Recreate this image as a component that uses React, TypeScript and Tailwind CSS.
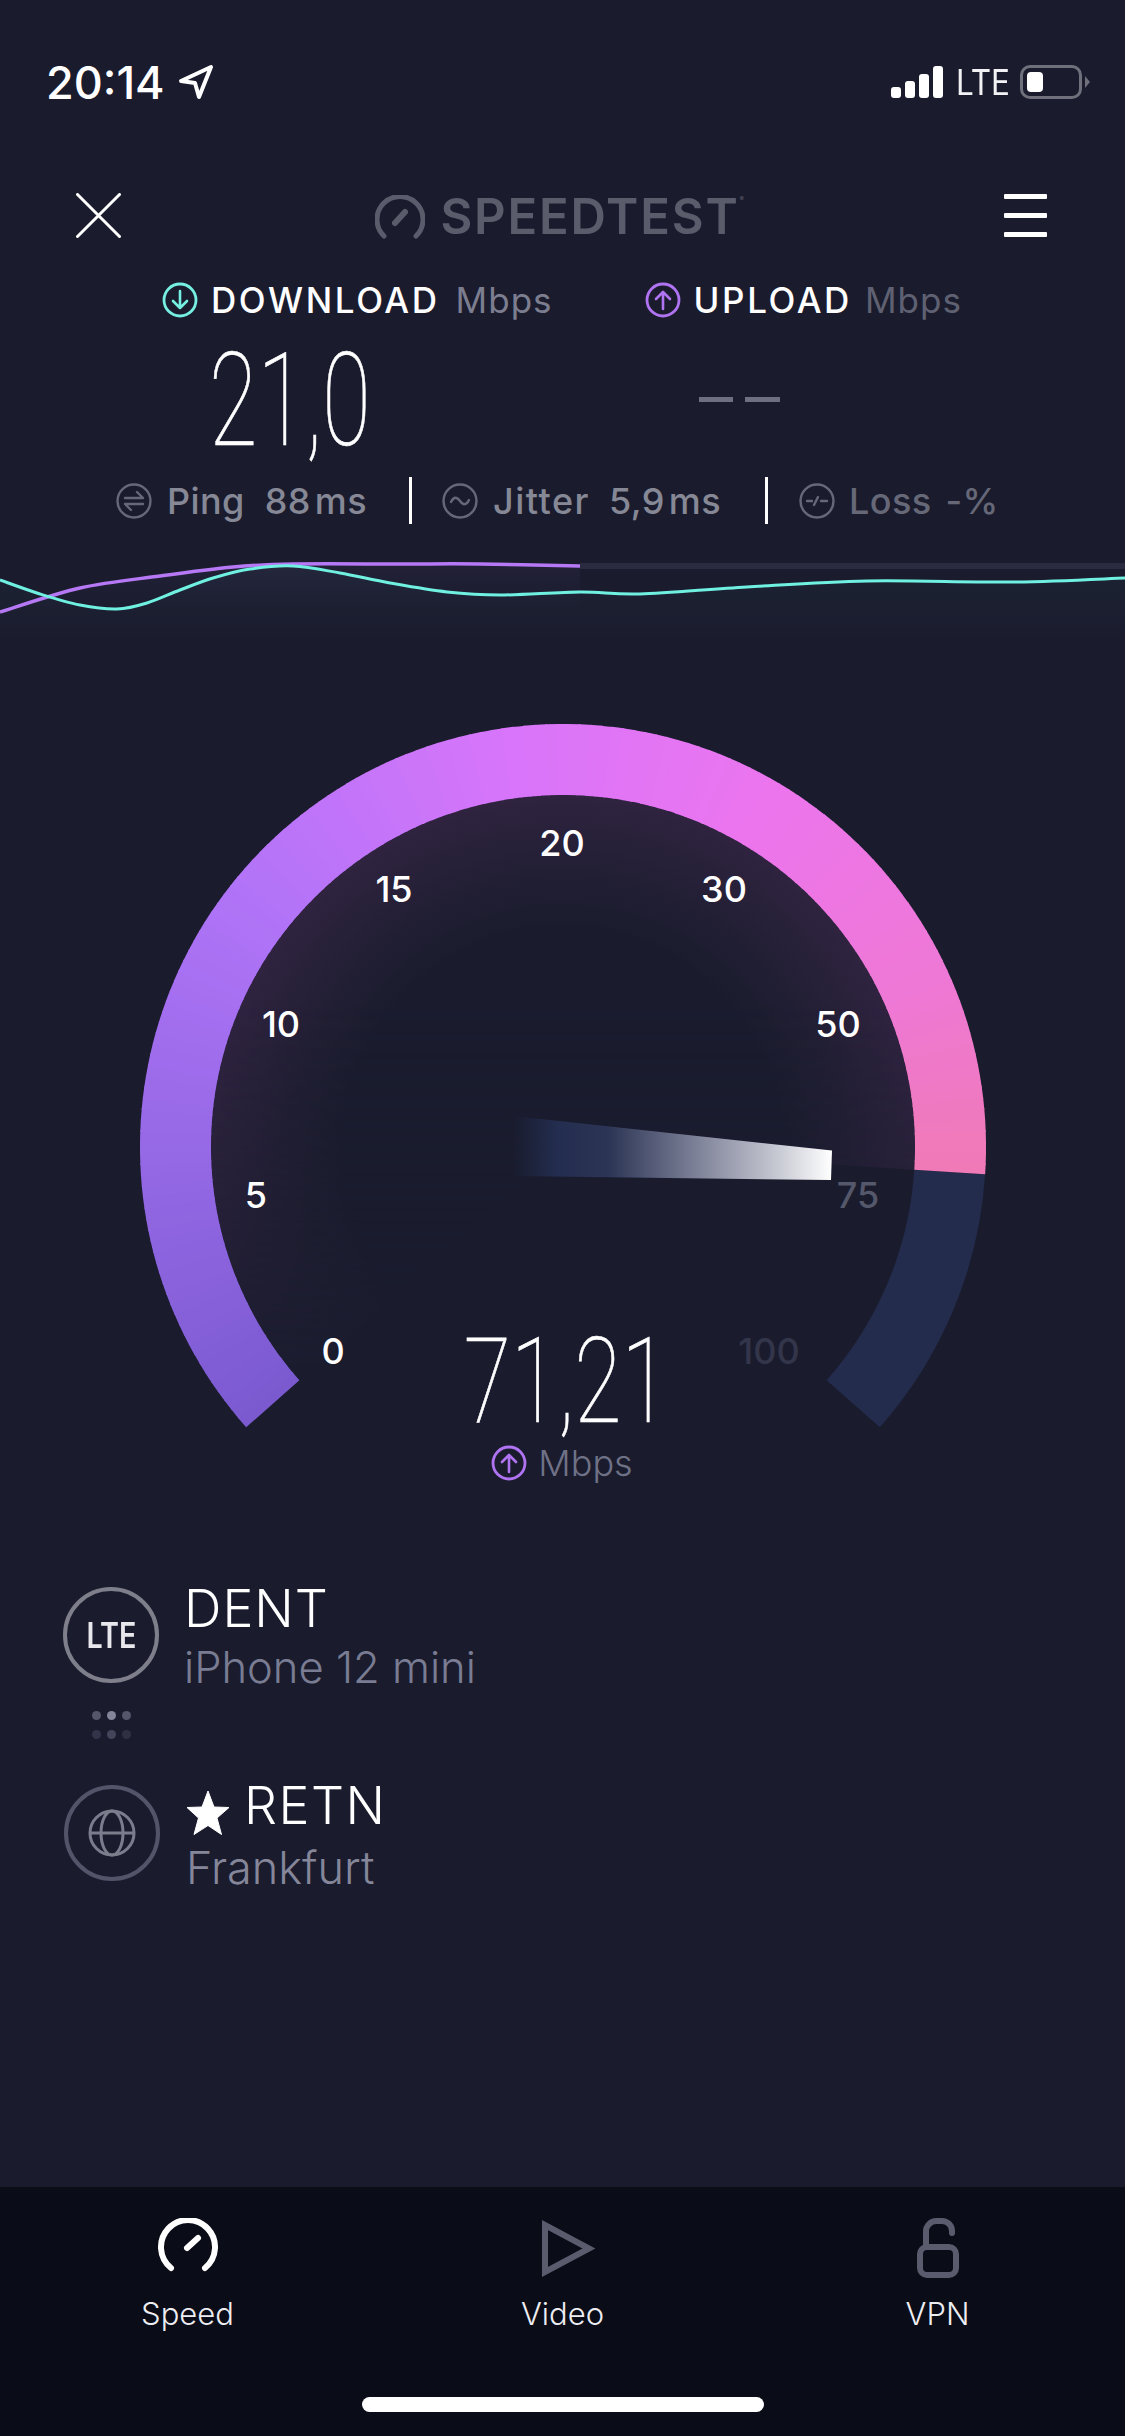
const SANS = "font-['Inter','Noto_Sans',sans-serif]";

// gauge geometry, in the svg's own coordinates
const CX = 563;
const CY = 447;
const R_OUT = 423;
const R_IN = 352;
const START = 138.5; // degrees clockwise from 3 o'clock
const FILL_END = 363.7;
const TRACK_END = 401.5; // 41.5 degrees below horizontal on the right

const polar = (r: number, deg: number) => {
  const a = (deg * Math.PI) / 180;
  return [CX + r * Math.cos(a), CY + r * Math.sin(a)];
};

const ringPath = (from: number, to: number) => {
  const [a, b] = polar(R_OUT, from);
  const [c, d] = polar(R_OUT, to);
  const [e, f] = polar(R_IN, to);
  const [g, h] = polar(R_IN, from);
  const large = to - from > 180 ? 1 : 0;
  return `M${a} ${b}A${R_OUT} ${R_OUT} 0 ${large} 1 ${c} ${d}L${e} ${f}A${R_IN} ${R_IN} 0 ${large} 0 ${g} ${h}Z`;
};

const STOPS: [number, number[]][] = [
  [0, [122, 90, 208]],
  [0.2, [152, 106, 232]],
  [0.36, [178, 116, 248]],
  [0.55, [216, 117, 250]],
  [0.72, [236, 117, 238]],
  [0.88, [238, 120, 212]],
  [1, [240, 122, 182]],
];

const colorAt = (t: number) => {
  for (let i = 1; i < STOPS.length; i++) {
    if (t <= STOPS[i][0]) {
      const [t0, c0] = STOPS[i - 1];
      const [t1, c1] = STOPS[i];
      const k = (t - t0) / (t1 - t0);
      const c = c0.map((v, j) => Math.round(v + (c1[j] - v) * k));
      return `rgb(${c[0]},${c[1]},${c[2]})`;
    }
  }
  return "rgb(240,122,182)";
};

const segments = Array.from({ length: 150 }, (_, i) => {
  const step = (FILL_END - START) / 150;
  const from = START + i * step;
  return { d: ringPath(from, Math.min(from + step + 0.25, FILL_END)), color: colorAt((i + 0.5) / 150) };
});

const smooth = (pts: number[][]) => {
  let d = `M${pts[0][0]} ${pts[0][1]}`;
  for (let i = 0; i < pts.length - 1; i++) {
    const p0 = pts[i - 1] || pts[i];
    const p1 = pts[i];
    const p2 = pts[i + 1];
    const p3 = pts[i + 2] || p2;
    d += `C${p1[0] + (p2[0] - p0[0]) / 6} ${p1[1] + (p2[1] - p0[1]) / 6} ${p2[0] - (p3[0] - p1[0]) / 6} ${p2[1] - (p3[1] - p1[1]) / 6} ${p2[0]} ${p2[1]}`;
  }
  return d;
};

// chart points, y relative to the top of the chart (540)
const PURPLE = [[0, 72], [80, 48], [160, 36], [233, 27], [293, 24], [400, 24], [480, 24], [580, 26]];
const CYAN = [[0, 40], [40, 54], [80, 65], [117, 69], [147, 63], [180, 50], [213, 38], [250, 29], [293, 26], [340, 33], [390, 43], [447, 52], [500, 55], [580, 52], [640, 54], [747, 47], [867, 41], [1013, 42], [1125, 38]];

function CircleArrow({ color, down }: { color: string; down?: boolean }) {
  return (
    <svg width="36" height="36" viewBox="0 0 36 36" fill="none" stroke={color} className="shrink-0">
      <circle cx="18" cy="18" r="16" strokeWidth="2.8" />
      {down ? (
        <path d="M18 9v17M11 19l7 7 7-7" strokeWidth="2.6" strokeLinecap="round" strokeLinejoin="round" />
      ) : (
        <path d="M18 27V10M11 17l7-7 7 7" strokeWidth="2.6" strokeLinecap="round" strokeLinejoin="round" />
      )}
    </svg>
  );
}

function StatIcon({ children, color }: { children: React.ReactNode; color: string }) {
  return (
    <svg width="36" height="36" viewBox="0 0 36 36" fill="none" stroke={color} strokeWidth="2.4" strokeLinecap="round" strokeLinejoin="round" className="shrink-0">
      <circle cx="18" cy="18" r="16.5" />
      {children}
    </svg>
  );
}

function TabLabel({ children }: { children: React.ReactNode }) {
  return <span className={`${SANS} text-[31px] font-light leading-none text-[#eeeef2] mt-[19px]`}>{children}</span>;
}

function Tick({ x, y, color = "text-white", children }: { x: number; y: number; color?: string; children: React.ReactNode }) {
  return (
    <span
      className={`${SANS} absolute -translate-x-1/2 -translate-y-1/2 text-[36px] leading-none font-medium ${color}`}
      style={{ left: x, top: y }}
    >
      {children}
    </span>
  );
}

function Gauge() {
  return (
    <div className="relative w-full h-[800px] mt-[40px] shrink-0">
      <svg width="1125" height="800" viewBox="0 0 1125 800" className="block">
        <defs>
          <radialGradient id="glow" gradientUnits="userSpaceOnUse" cx={CX} cy={CY} r={R_IN}>
            <stop offset="0.62" stopColor="#1a1c2e" />
            <stop offset="0.8" stopColor="#231f35" />
            <stop offset="1" stopColor="#2f2340" />
          </radialGradient>
          <linearGradient id="glowFade" gradientUnits="userSpaceOnUse" x1="0" y1="300" x2="0" y2="680">
            <stop offset="0" stopColor="#fff" />
            <stop offset="0.4" stopColor="#bbb" />
            <stop offset="1" stopColor="#000" />
          </linearGradient>
          <mask id="glowMask" maskUnits="userSpaceOnUse" x="0" y="0" width="1125" height="800">
            <rect width="1125" height="800" fill="url(#glowFade)" />
          </mask>
          <linearGradient id="needle" gradientUnits="userSpaceOnUse" x1="513" y1="0" x2="832" y2="0">
            <stop offset="0" stopColor="#232d4f" stopOpacity="0" />
            <stop offset="0.14" stopColor="#232d4f" />
            <stop offset="0.3" stopColor="#2c3555" />
            <stop offset="0.55" stopColor="#767a92" />
            <stop offset="0.82" stopColor="#c4c6d0" />
            <stop offset="1" stopColor="#ffffff" />
          </linearGradient>
        </defs>
        {/* glow inside the filled part */}
        <path
          d={`M${CX} ${CY}L${polar(R_IN, START).join(" ")}A${R_IN} ${R_IN} 0 1 1 ${polar(R_IN, FILL_END).join(" ")}Z`}
          fill="url(#glow)"
          mask="url(#glowMask)"
        />
        {/* dark rest of the track */}
        <path d={ringPath(FILL_END, TRACK_END)} fill="#232c4c" />
        {segments.map((s, i) => (
          <path key={i} d={s.d} fill={s.color} />
        ))}
        {/* needle */}
        <path d="M513 416L832 450.500L831 480L513 476Z" fill="url(#needle)" />
      </svg>

      {/* scale labels sit on the dial */}
      <Tick x={333} y={651}>0</Tick>
      <Tick x={256} y={495}>5</Tick>
      <Tick x={281} y={324}>10</Tick>
      <Tick x={394} y={189}>15</Tick>
      <Tick x={562} y={143}>20</Tick>
      <Tick x={724} y={189}>30</Tick>
      <Tick x={838} y={324}>50</Tick>
      <Tick x={858} y={495} color="text-[#55576a]">75</Tick>
      <Tick x={769} y={651} color="text-[#33354a]">100</Tick>

      <div className="absolute left-0 right-0 top-[632px] flex flex-col items-center">
        <span className="font-['Roboto',sans-serif] font-[150] [-webkit-text-stroke:0.7px_white] text-[118px] leading-[100px] text-white scale-x-[0.73] translate-x-[4px] whitespace-nowrap">
          71,21
        </span>
        <div className="flex items-center gap-[11px] mt-[13px] ml-[-1px]">
          <CircleArrow color="#b074f2" />
          <span className={`${SANS} font-light text-[36px] leading-[36px] text-[#6f7286]`}>Mbps</span>
        </div>
      </div>
    </div>
  );
}

export default function App() {
  return (
    <div className={`${SANS} w-[1125px] h-[2436px] bg-[#1a1c2e] flex flex-col overflow-hidden`}>
      {/* Status bar */}
      <div className="flex items-center justify-between h-[44px] mt-[60px] pl-[46px] pr-[35px]">
        <div className="flex items-center gap-[13px]">
          <span className="text-[45px] leading-none font-medium text-white">20:14</span>
          <svg width="36" height="36" viewBox="0 0 36 36" fill="none" stroke="#fff" strokeWidth="4" strokeLinejoin="round">
            <path d="M3 17L33 3L21 33L17 19Z" />
          </svg>
        </div>
        <div className="flex items-center">
          <div className="flex items-end gap-[4px] h-[32px]">
            <div className="w-[10px] h-[11px] rounded-[3px] bg-white" />
            <div className="w-[10px] h-[17px] rounded-[3px] bg-white" />
            <div className="w-[10px] h-[24px] rounded-[3px] bg-white" />
            <div className="w-[10px] h-[32px] rounded-[3px] bg-white" />
          </div>
          <span className="text-[35px] leading-none font-normal text-[#f2f2f4] ml-[13px] scale-x-[0.9] origin-left w-[52px]">LTE</span>
          <div className="flex items-center ml-[12px]">
            <div className="w-[62px] h-[34px] rounded-[10px] border-[3px] border-[#6f707c] p-[4px]">
              <div className="w-[16px] h-full rounded-[4px] bg-white" />
            </div>
            <div className="w-0 h-0 ml-[3px] border-y-[6px] border-y-transparent border-l-[5px] border-l-[#6f707c]" />
          </div>
        </div>
      </div>

      {/* Header */}
      <div className="flex items-center justify-between h-[50px] mt-[86px] pl-[76px] pr-[78px]">
        <svg width="45" height="45" viewBox="0 0 45 45" stroke="#fff" strokeWidth="3" strokeLinecap="round">
          <path d="M1.500 1.500L43.500 43.500M43.500 1.500L1.500 43.500" />
        </svg>
        <div className="flex items-center gap-[15px] mt-[3px] ml-[-4px]">
          <svg width="50" height="44" viewBox="0 0 50 44" fill="none" stroke="#5a5c6c" strokeWidth="5" strokeLinecap="round">
            <path d="M9 41A23 23 0 1 1 41 41" />
            <path d="M20 28L30 17" strokeWidth="6" />
          </svg>
          <span className="text-[49px] leading-none font-semibold tracking-[1.8px] text-[#5a5c6c] relative pr-[6px]">
            SPEEDTEST
            <span className="absolute right-0 top-[4px] text-[6px] leading-none">®</span>
          </span>
        </div>
        <div className="flex flex-col gap-[14px] w-[43px]">
          <div className="h-[5px] bg-white rounded-[1px]" />
          <div className="h-[5px] bg-white rounded-[1px]" />
          <div className="h-[5px] bg-white rounded-[1px]" />
        </div>
      </div>

      {/* Download / upload heads */}
      <div className="flex items-center h-[36px] mt-[42px] pl-[162px]">
        <CircleArrow color="#76efe3" down />
        <span className="text-[35px] leading-none font-medium tracking-[2.6px] text-white ml-[13px]">DOWNLOAD</span>
        <span className="text-[35px] leading-none font-normal tracking-[1px] text-[#7c7e90] ml-[16px]">Mbps</span>
        <div className="ml-[92px]">
          <CircleArrow color="#b074f2" />
        </div>
        <span className="text-[35px] leading-none font-medium tracking-[2.6px] text-white ml-[13px]">UPLOAD</span>
        <span className="text-[35px] leading-none font-normal tracking-[1px] text-[#5f6172] ml-[13px]">Mbps</span>
      </div>

      {/* Big values */}
      <div className="flex items-center h-[124px] mt-[21px]">
        <div className="w-[290px] ml-[145px] flex justify-center">
          <span className="font-['Roboto',sans-serif] font-[150] [-webkit-text-stroke:0.7px_white] text-[130px] leading-[124px] text-white scale-x-[0.68] whitespace-nowrap">21,0</span>
        </div>
        <div className="flex gap-[12px] ml-[264px] mt-[-4px]">
          <div className="w-[34px] h-[5px] bg-[#6e7082]" />
          <div className="w-[35px] h-[5px] bg-[#6e7082]" />
        </div>
      </div>

      {/* Ping / jitter / loss */}
      <div className="flex items-center h-[47px] mt-[14px] pl-[116px] text-[36px] leading-none tracking-[0.4px]">
        <StatIcon color="#666878">
          <path d="M9 15H27L21 9M27 21H9L15 27" />
        </StatIcon>
        <span className="text-[#868896] font-medium ml-[15px]">Ping</span>
        <span className="text-[#868896] font-medium ml-[20px]">88</span>
        <span className="text-[#868896] font-medium ml-[4px]">ms</span>
        <div className="w-[3px] h-[47px] bg-white ml-[42px]" />
        <div className="ml-[30px]">
          <StatIcon color="#666878">
            <path d="M9 19C12 13 15 14 18 18S24 23 27 17" />
          </StatIcon>
        </div>
        <span className="text-[#868896] font-medium tracking-[1.5px] ml-[15px]">Jitter</span>
        <span className="text-[#868896] font-medium ml-[19px]">5,9</span>
        <span className="text-[#868896] font-medium ml-[4px]">ms</span>
        <div className="w-[3px] h-[47px] bg-white ml-[44px]" />
        <div className="ml-[31px]">
          <StatIcon color="#666878">
            <path d="M8 18H13M15 22L19 14M22 18H28" />
          </StatIcon>
        </div>
        <span className="text-[#666878] font-medium ml-[14px]">Loss</span>
        <span className="text-[#666878] font-medium ml-[14px]">-%</span>
      </div>

      {/* Live chart */}
      <svg width="1125" height="120" viewBox="0 0 1125 120" className="block mt-[16px] shrink-0">
        <defs>
          <linearGradient id="cyanFill" gradientUnits="userSpaceOnUse" x1="0" y1="30" x2="0" y2="105">
            <stop offset="0" stopColor="#6ff0e0" stopOpacity="0.03" />
            <stop offset="1" stopColor="#6ff0e0" stopOpacity="0" />
          </linearGradient>
          <linearGradient id="purpleFill" gradientUnits="userSpaceOnUse" x1="0" y1="24" x2="0" y2="70">
            <stop offset="0" stopColor="#b678f5" stopOpacity="0.05" />
            <stop offset="1" stopColor="#b678f5" stopOpacity="0" />
          </linearGradient>
        </defs>
        <path d={`${smooth(PURPLE)}V70H0Z`} fill="url(#purpleFill)" />
        <path d={`${smooth(CYAN)}V105H0Z`} fill="url(#cyanFill)" />
        <rect x="580" y="23" width="545" height="6" fill="#2a2b40" />
        <path d={smooth(PURPLE)} fill="none" stroke="#b678f5" strokeWidth="3.500" />
        <path d={smooth(CYAN)} fill="none" stroke="#6ff0e0" strokeWidth="3" />
      </svg>

      <Gauge />

      {/* Carrier */}
      <div className="flex items-start h-[96px] mt-[87px] ml-[63px]">
        <div className="w-[96px] h-[96px] rounded-full border-[4px] border-[#7e7f8b] flex items-center justify-center shrink-0">
          <span className="text-[35px] leading-none font-semibold text-[#e8e8ec] scale-x-[0.82]">LTE</span>
        </div>
        <div className="flex flex-col ml-[25px] mt-[-3px]">
          <span className="text-[52px] leading-[50px] font-light tracking-[1px] text-white">DENT</span>
          <span className="text-[43.500px] leading-[46px] font-light text-[#797c92] mt-[10px]">iPhone 12 mini</span>
        </div>
      </div>

      <div className="grid grid-cols-3 w-[39px] gap-x-[6px] gap-y-[10px] mt-[28px] ml-[92px]">
        <div className="w-[9px] h-[9px] rounded-full bg-[#55566a]" />
        <div className="w-[9px] h-[9px] rounded-full bg-[#84859a]" />
        <div className="w-[9px] h-[9px] rounded-full bg-[#55566a]" />
        <div className="w-[9px] h-[9px] rounded-full bg-[#33344a]" />
        <div className="w-[9px] h-[9px] rounded-full bg-[#44455a]" />
        <div className="w-[9px] h-[9px] rounded-full bg-[#2f3044]" />
      </div>

      {/* Server */}
      <div className="flex items-start h-[96px] mt-[46px] ml-[64px]">
        <div className="w-[96px] h-[96px] rounded-full border-[4px] border-[#53546a] flex items-center justify-center shrink-0">
          <svg width="48" height="48" viewBox="0 0 48 48" fill="none" stroke="#7c7d8c" strokeWidth="3">
            <circle cx="24" cy="24" r="22" />
            <ellipse cx="24" cy="24" rx="11" ry="22" />
            <path d="M2 24H46" />
          </svg>
        </div>
        <div className="flex flex-col ml-[26px] mt-[-4px]">
          <div className="flex items-start">
            <svg width="44" height="46" viewBox="0 0 44 46" className="mt-[9px]">
              <path d="M22 1L28 17L43 17.500L31 28L35.500 44.500L22 35.500L8 44.500L12.500 28L1 17.500L16 17Z" fill="#fff" stroke="#fff" strokeWidth="1" strokeLinejoin="round" />
            </svg>
            <span className="text-[52px] leading-[50px] font-light tracking-[1.5px] text-white ml-[14px]">RETN</span>
          </div>
          <span className="text-[45px] leading-[46px] font-light text-[#85869a] mt-[9px]">Frankfurt</span>
        </div>
      </div>

      {/* Tab bar */}
      <div className="mt-auto h-[249px] shrink-0 bg-[#0a0c18] flex flex-col">
        <div className="grid grid-cols-3 pt-[31px]">
          <div className="flex flex-col items-center w-[375px]">
            <div className="h-[61px] flex items-start">
              <svg width="62" height="54" viewBox="0 0 62 54" fill="none" stroke="#fff" strokeWidth="6" strokeLinecap="round">
                <path d="M14 50A27 27 0 1 1 48 50" />
                <path d="M30 30L41 20" />
              </svg>
            </div>
            <TabLabel>Speed</TabLabel>
          </div>
          <div className="flex flex-col items-center w-[375px]">
            <div className="h-[61px] flex items-start ml-[12px]">
              <svg width="54" height="61" viewBox="0 0 54 61" fill="none" stroke="#5a5c6e" strokeWidth="6">
                <path d="M3 7V54L47 30.500Z" />
              </svg>
            </div>
            <TabLabel>Video</TabLabel>
          </div>
          <div className="flex flex-col items-center w-[375px]">
            <div className="h-[61px] flex items-start">
              <svg width="42" height="60" viewBox="0 0 42 60" fill="none" stroke="#5a5c6e" strokeWidth="6" strokeLinecap="round">
                <rect x="3" y="29" width="36" height="28" rx="7" />
                <path d="M9 29V14A10.500 10.500 0 0 1 19.500 3H25A10 10 0 0 1 35 13V15" />
              </svg>
            </div>
            <TabLabel>VPN</TabLabel>
          </div>
        </div>
        <div className="w-[402px] h-[15px] rounded-full bg-white mx-auto mt-auto mb-[24px]" />
      </div>
    </div>
  );
}
